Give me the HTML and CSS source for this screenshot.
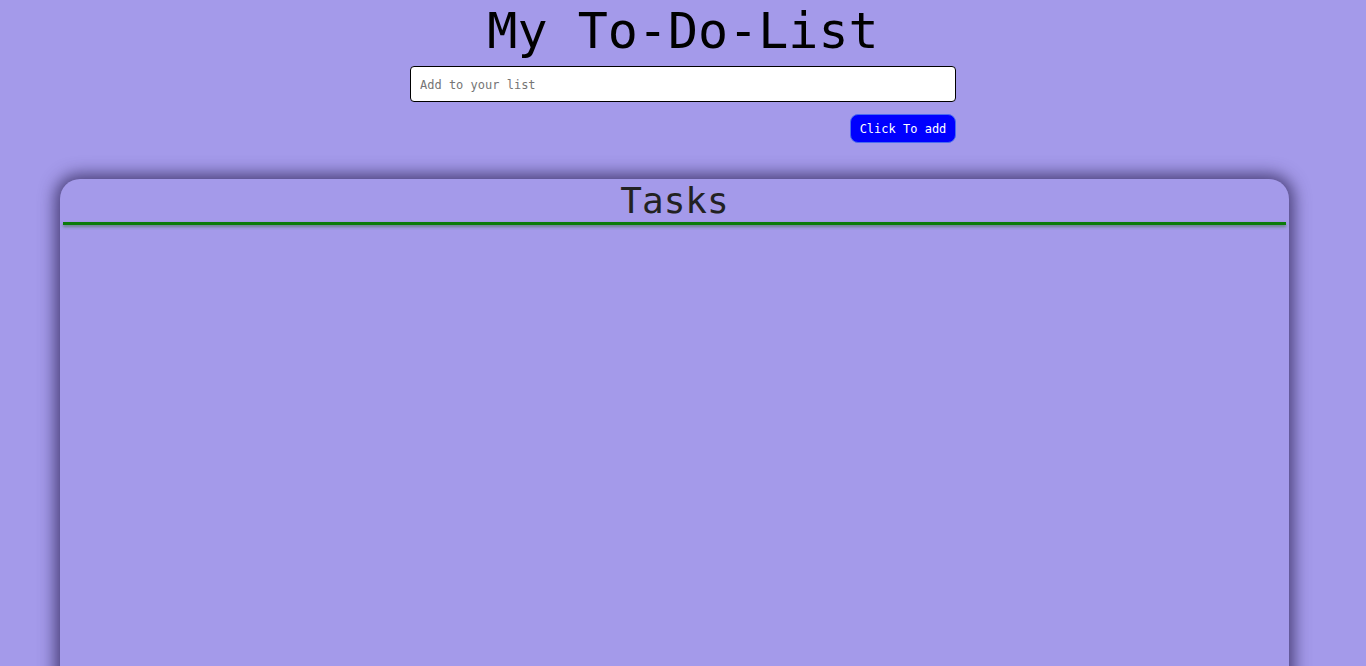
FILE: index.html
```html
<!DOCTYPE html>
<html>
<head>
<meta charset="utf-8">
<link rel="stylesheet" href="styles.css">
</head>
<body>
<header class="top">
  <h1 class="title">My To-Do-List</h1>
  <div class="form">
    <input class="field" type="text" placeholder="Add to your list">
    <div class="actions"><button class="add">Click To add</button></div>
  </div>
</header>
<section class="card">
  <h2 class="card-title">Tasks</h2>
  <div class="rule"></div>
</section>
</body>
</html>
```
FILE: styles.css
```css
html, body { margin: 0; padding: 0; }
body {
  background: #a49aea;
  font-family: "DejaVu Sans Mono", monospace;
  height: 666px;
  overflow: hidden;
}
.top { display: flex; flex-direction: column; align-items: center; }
.title {
  margin: 0;
  font-family: "DejaVu Sans Mono", monospace;
  font-weight: normal;
  font-size: 50px;
  line-height: 62px;
  color: #000;
}
.form { width: 546px; display: flex; flex-direction: column; margin-top: 4px; }
.field {
  box-sizing: border-box;
  width: 546px;
  height: 36px;
  border: 1px solid #000;
  border-radius: 4px;
  background: #fff;
  padding: 1px 9px 0;
  font-family: "DejaVu Sans Mono", monospace;
  font-size: 12px;
  outline: none;
}
.field::placeholder { color: #757575; }
.actions { display: flex; justify-content: flex-end; margin-top: 12px; }
.add {
  box-sizing: border-box;
  height: 29px;
  width: 106px;
  background: #0000ff;
  color: #fff;
  border: 1px solid #4a6cf0;
  border-radius: 8px;
  font-family: "DejaVu Sans Mono", monospace;
  font-size: 12px;
  padding: 0;
}
.card {
  margin: 36px 0 0 60px;
  width: 1229px;
  height: 600px;
  border-radius: 20px;
  box-shadow: 0 0 16px 5px rgba(40, 30, 80, 0.72);
  background: #a49aea;
  padding: 0 3px;
  box-sizing: border-box;
}
.card-title {
  margin: 0;
  text-align: center;
  font-family: "DejaVu Sans Mono", monospace;
  font-weight: normal;
  font-size: 36px;
  line-height: 43px;
  color: #222;
}
.rule {
  height: 3px;
  background: #0a7a0a;
  box-shadow: 0 2px 3px rgba(40, 100, 40, 0.5);
}
```
